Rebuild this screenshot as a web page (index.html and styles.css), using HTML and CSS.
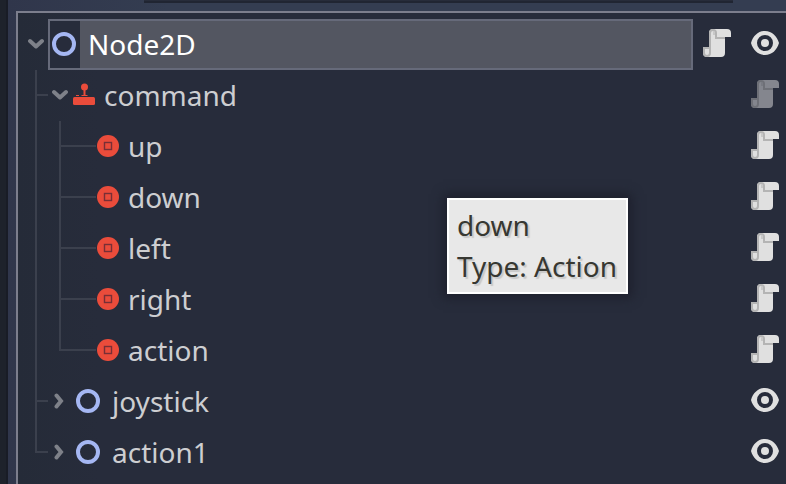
FILE: index.html
```html
<!DOCTYPE html>
<html lang="en">
<head>
<meta charset="utf-8">
<title>Scene tree</title>
<link rel="stylesheet" href="styles.css">
</head>
<body>
<svg class="defs" aria-hidden="true">
  <symbol id="down" viewBox="0 0 16 16"><path d="M2 5l6 5.500L14 5" fill="none" stroke="currentColor" stroke-width="4" stroke-linecap="round" stroke-linejoin="round"/></symbol>
  <symbol id="right" viewBox="0 0 16 16"><path d="M4.500 2.500L9 8l-4.500 5.500" fill="none" stroke="currentColor" stroke-width="4" stroke-linecap="round" stroke-linejoin="miter"/></symbol>
  <symbol id="ring" viewBox="0 0 24 24"><circle cx="12" cy="12" r="10" fill="none" stroke="#a5b7f3" stroke-width="4"/></symbol>
  <symbol id="stick" viewBox="0 0 24 24"><g fill="#ea4c3b"><circle cx="12.500" cy="4" r="3.500"/><path d="M11.500 6h2v6h2v1h-6v-1h2z"/><path d="M4 13v-1h3v1z"/><rect x="1" y="14" width="22" height="8" rx="1.500"/></g></symbol>
  <symbol id="press" viewBox="0 0 24 24"><circle cx="12" cy="12" r="11" fill="#ea4c3b"/><rect x="8.500" y="8.500" width="7" height="7" fill="none" stroke="#772f36" stroke-width="1.400"/></symbol>
  <symbol id="script" viewBox="0 0 14 14"><path d="M5 0h7a2 2 0 0 1 2 2v2h-3v8a2 2 0 0 1-2 2H2a2 2 0 0 1-2-2V9h3V2a2 2 0 0 1 2-2z" fill="#e0e0e0"/><path d="M3 9V2a2 2 0 0 1 4 0v2h4v1H6V2a1 1 0 0 0-1-1 1 1 0 0 0-1 1v10a2 2 0 0 1-2 2 2 2 0 0 1-2-2V9zM1 10v2a1 1 0 0 0 1 1 1 1 0 0 0 1-1v-2z" fill="#b4b4b4"/><path d="M5 1a1 1 0 0 1 1 1v1H5z" fill="#c8c8c8"/></symbol>
  <symbol id="eye" viewBox="0 0 28 24"><path d="M14 0C7 0 2 5 0 12c2 7 7 12 14 12s12-5 14-12C26 5 21 0 14 0zm0 4a8 8 0 1 1 0 16 8 8 0 0 1 0-16zm0 4a4 4 0 1 0 0 8 4 4 0 0 0 0-8z" fill="#e0e0e0"/></symbol>
</svg>
<div class="dock">
  <div class="search-edge"></div>
  <main class="panel">
    <ul class="tree">
      <li>
        <div class="row root">
          <button class="toggle" aria-label="Collapse Node2D"><svg><use href="#down"/></svg></button>
          <div class="selected"><span class="type"><svg class="icon"><use href="#ring"/></svg></span><span class="name">Node2D</span></div>
          <button class="tool" aria-label="Open script"><svg class="script"><use href="#script"/></svg></button>
          <button class="tool" aria-label="Toggle visibility"><svg class="eye"><use href="#eye"/></svg></button>
        </div>
        <ul class="branch">
          <li>
            <div class="row">
              <button class="toggle" aria-label="Collapse command"><svg><use href="#down"/></svg></button>
              <svg class="icon tight"><use href="#stick"/></svg><span class="name">command</span>
              <button class="tool dim" aria-label="Open script"><svg class="script"><use href="#script"/></svg></button>
            </div>
            <ul class="branch leaves">
              <li><div class="row"><svg class="icon"><use href="#press"/></svg><span class="name">up</span><button class="tool" aria-label="Open script"><svg class="script"><use href="#script"/></svg></button></div></li>
              <li><div class="row"><svg class="icon"><use href="#press"/></svg><span class="name">down</span><button class="tool" aria-label="Open script"><svg class="script"><use href="#script"/></svg></button></div></li>
              <li><div class="row"><svg class="icon"><use href="#press"/></svg><span class="name">left</span><button class="tool" aria-label="Open script"><svg class="script"><use href="#script"/></svg></button></div></li>
              <li><div class="row"><svg class="icon"><use href="#press"/></svg><span class="name">right</span><button class="tool" aria-label="Open script"><svg class="script"><use href="#script"/></svg></button></div></li>
              <li><div class="row"><svg class="icon"><use href="#press"/></svg><span class="name">action</span><button class="tool" aria-label="Open script"><svg class="script"><use href="#script"/></svg></button></div></li>
            </ul>
          </li>
          <li>
            <div class="row">
              <button class="toggle" aria-label="Expand joystick"><svg><use href="#right"/></svg></button>
              <svg class="icon wide"><use href="#ring"/></svg><span class="name">joystick</span>
              <button class="tool" aria-label="Toggle visibility"><svg class="eye"><use href="#eye"/></svg></button>
            </div>
          </li>
          <li>
            <div class="row">
              <button class="toggle" aria-label="Expand action1"><svg><use href="#right"/></svg></button>
              <svg class="icon wide"><use href="#ring"/></svg><span class="name">action1</span>
              <button class="tool" aria-label="Toggle visibility"><svg class="eye"><use href="#eye"/></svg></button>
            </div>
          </li>
        </ul>
      </li>
    </ul>
  </main>
</div>
<div class="tooltip" role="tooltip">down<br>Type: Action</div>
</body>
</html>
```
FILE: styles.css
```css
* { box-sizing: border-box; }

body {
  margin: 0;
  min-height: 100vh;
  display: flex;
  overflow: hidden;
  background: #1e222b;
  color: #cdced1;
  font: 28px/36px "Noto Sans", "Open Sans", sans-serif;
}

.defs { position: absolute; width: 0; height: 0; }
svg { display: block; flex: none; }
ul { list-style: none; margin: 0; padding: 0; }

.dock {
  flex: 1;
  display: flex;
  flex-direction: column;
  margin-left: 6px;
  padding-left: 8px;
  border-left: 2px solid #191c26;
  background: linear-gradient(90deg, #30364b, #343d51 160px);
}

.search-edge {
  height: 3px;
  margin: 0 53px 8px 128px;
  background: #272c3a;
  border-bottom: 2px solid #202532;
}

.panel {
  flex: 1;
  padding-top: 6px;
  border: solid #7c7e8d;
  border-width: 2px 0 0 2px;
  background: linear-gradient(90deg, #252b38, #272c3b 80px);
}

.row {
  display: flex;
  align-items: center;
  height: 51px;
  padding: 0 7px 2px 10px;
}

.row.root { padding-bottom: 0; }
.root .toggle,
.root .name,
.root .type { padding-bottom: 2px; }

.name { flex: 1; margin-left: 8px; }

button {
  flex: none;
  padding: 0;
  border: 0;
  background: none;
  color: #7e8189;
}

.toggle svg { width: 16px; height: 16px; }
.icon { width: 24px; height: 24px; }
.icon.tight { margin-left: 4px; }
.icon.wide { margin-left: 8px; }
.icon.wide + .name { margin-left: 12px; }

.tool { margin: 0 0 2px 20px; }
.root .tool { margin-bottom: 4px; }
.tool.dim { opacity: 0.5; }
.script { width: 28px; height: 28px; }
.eye { width: 28px; height: 24px; }

.selected {
  flex: 1;
  align-self: stretch;
  display: flex;
  align-items: center;
  margin-left: 4px;
  border: 2px solid #666a7a;
  background: #535661;
  color: #fff;
}

.selected + .tool { margin-left: 10px; }

.type {
  align-self: stretch;
  display: flex;
  align-items: center;
  padding: 0 4px 0 2px;
  background: #272c3b;
}

.branch { padding-left: 17px; }
.branch > li { position: relative; }
.branch .row { padding-left: 17px; }
.leaves { padding-left: 24px; }
.branch .leaves .row { padding-left: 37px; }

/* Guide lines joining each node to its parent */
.branch > li::before,
.branch > li::after {
  content: "";
  position: absolute;
  top: 0;
  left: 0;
  width: 2px;
  height: 100%;
  background: #3b404d;
}
.branch > li:last-child::before { height: 26px; }
.branch > li::after { top: 24px; width: 13px; height: 2px; }
.leaves > li::after { width: 37px; }

.tooltip {
  position: absolute;
  left: 447px;
  top: 198px;
  padding: 5px 9px 5px 8px;
  border: 2px solid #fff;
  background: #e8e8e8;
  color: #373832;
  line-height: 41px;
  text-shadow: 2px 2px 1px #c8c8c8;
  box-shadow: 0 0 10px 4px #1e202d;
}
```
